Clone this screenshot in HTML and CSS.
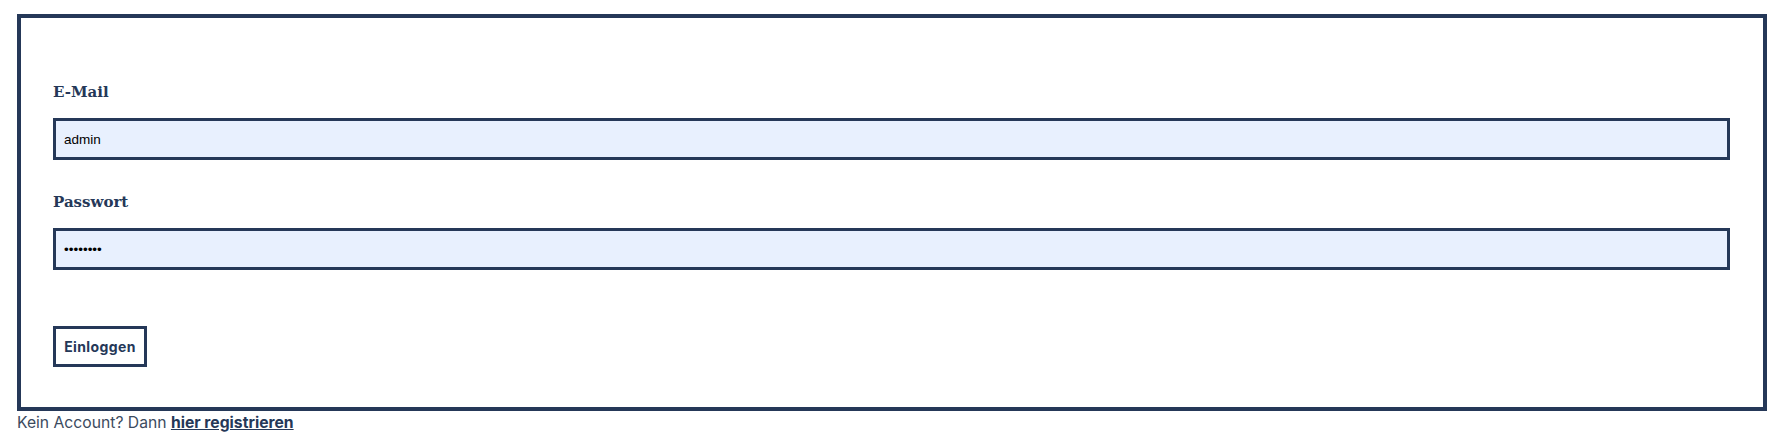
FILE: index.html
```html
<!DOCTYPE html>
<html lang="de">
<head>
<meta charset="utf-8">
<title>Login</title>
<link rel="stylesheet" href="styles.css">
</head>
<body>
<div class="page">
  <form class="login-box">
    <div class="field">
      <label class="field-label" for="email">E-Mail</label>
      <input class="field-input" id="email" type="text" value="admin">
    </div>
    <div class="field">
      <label class="field-label" for="pw">Passwort</label>
      <input class="field-input" id="pw" type="password" value="12345678">
    </div>
    <div class="actions">
      <button class="btn" type="button">Einloggen</button>
    </div>
  </form>
  <p class="register">Kein Account? Dann <a class="register-link" href="#">hier registrieren</a></p>
</div>
</body>
</html>
```
FILE: styles.css
```css
* { box-sizing: border-box; }
html, body { margin: 0; padding: 0; background: #fff; }
.page {
  padding: 14px 16px 0 17px;
}
.login-box {
  border: 4px solid #253858;
  padding: 66px 33px 40px 32px;
  display: flex;
  flex-direction: column;
}
.field {
  display: flex;
  flex-direction: column;
  margin-bottom: 34px;
}
.field + .field { margin-bottom: 0; }
.field-label {
  font-family: "DejaVu Serif", serif;
  font-weight: bold;
  font-size: 15px;
  line-height: 16px;
  color: #253858;
  margin-bottom: 18px;
}
.field-input {
  height: 42px;
  border: 3px solid #253858;
  background: #e8f0fe;
  font-family: "Liberation Sans", Arial, sans-serif;
  font-size: 13.5px;
  color: #000;
  padding: 0 8px;
  outline: none;
  width: 100%;
}
.actions {
  margin-top: 56px;
  display: flex;
}
.btn {
  height: 41px;
  border: 3px solid #253858;
  background: #fff;
  color: #253858;
  font-family: Inter, "Noto Sans", sans-serif;
  font-weight: 700;
  font-size: 14px;
  letter-spacing: 0.4px;
  padding: 0 4px;
  width: 94px;
  cursor: pointer;
}
.register {
  margin: 0;
  padding-top: 2px;
  font-family: Inter, "Noto Sans", sans-serif;
  font-size: 15.7px;
  line-height: 20px;
  color: #3b4a5e;
}
.register-link {
  color: #253858;
  font-weight: 700;
  text-decoration: underline;
}
```
